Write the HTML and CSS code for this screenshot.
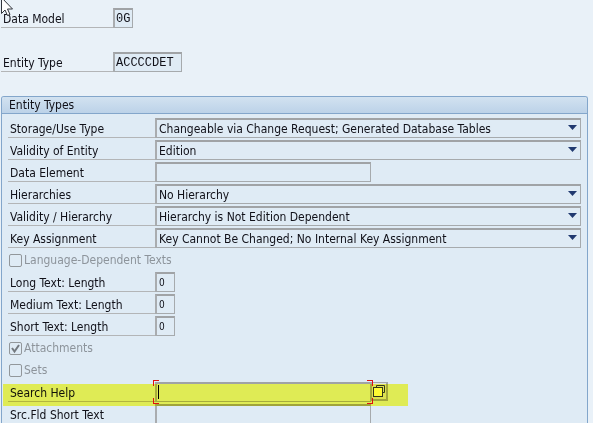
FILE: index.html
```
<!DOCTYPE html>
<html lang="en">
<head>
<meta charset="utf-8">
<title>Entity Type</title>
<link rel="stylesheet" href="styles.css">
</head>
<body>
<form class="page">
  <div class="keys">
    <div class="row"><label class="label" for="model">Data Model</label><input class="field mono w2" id="model" value="0G" readonly></div>
    <div class="row"><label class="label" for="entity">Entity Type</label><input class="field mono w8" id="entity" value="ACCCCDET" readonly></div>
  </div>
  <section class="panel">
    <h2 class="title">Entity Types</h2>
    <div class="rows">
      <div class="row"><label class="label" for="storage">Storage/Use Type</label><select class="field wide" id="storage"><option>Changeable via Change Request; Generated Database Tables</option></select></div>
      <div class="row"><label class="label" for="validity">Validity of Entity</label><select class="field wide" id="validity"><option>Edition</option></select></div>
      <div class="row"><label class="label" for="element">Data Element</label><input class="field text" id="element"></div>
      <div class="row"><label class="label" for="hier">Hierarchies</label><select class="field wide" id="hier"><option>No Hierarchy</option></select></div>
      <div class="row"><label class="label" for="vhier">Validity / Hierarchy</label><select class="field wide" id="vhier"><option>Hierarchy is Not Edition Dependent</option></select></div>
      <div class="row"><label class="label" for="keyas">Key Assignment</label><select class="field wide" id="keyas"><option>Key Cannot Be Changed; No Internal Key Assignment</option></select></div>
      <label class="check"><input type="checkbox" disabled>Language-Dependent Texts</label>
      <div class="row"><label class="label" for="long">Long Text: Length</label><input class="field num" id="long" value="0"></div>
      <div class="row"><label class="label" for="medium">Medium Text: Length</label><input class="field num" id="medium" value="0"></div>
      <div class="row"><label class="label" for="short">Short Text: Length</label><input class="field num" id="short" value="0"></div>
      <label class="check"><input type="checkbox" checked disabled>Attachments</label>
      <label class="check"><input type="checkbox" disabled>Sets</label>
      <div class="row marked">
        <label class="label" for="search">Search Help</label>
        <span class="focus"><input class="field text" id="search"><i class="caret"></i>
          <i class="corner tl"></i><i class="corner tr"></i><i class="corner bl"></i><i class="corner br"></i></span>
        <button class="help" type="button" aria-label="Possible entries">
          <svg width="12" height="12" viewBox="0 0 12 12"><path d="M3.500 2.500v-2h8v7h-2" fill="none" stroke="#33364a"/><rect x=".5" y="2.500" width="9" height="9" fill="#fffb90" stroke="#33364a"/></svg>
        </button>
      </div>
      <div class="row"><label class="label" for="src">Src.Fld Short Text</label><input class="field text" id="src"></div>
    </div>
  </section>
</form>
<svg class="pointer" width="14" height="22" viewBox="0 0 14 22"><path d="M1.500-2.500v16l3.500-3.500 2.500 5.500 2.500-1-2.500-5.500h5z" fill="#fff" stroke="#30343c"/></svg>
</body>
</html>
```
FILE: styles.css
```
* { box-sizing: border-box; }
body {
  margin: 0;
  background: #e9f1f8;
  color: #101018;
  font: 12px/18px "DejaVu Sans Condensed", "DejaVu Sans", sans-serif;
  font-stretch: condensed;
}
.page {
  display: flex;
  flex-direction: column;
  height: 100vh;
  padding: 8px 5px 0 1px;
  overflow: hidden;
}
.keys { display: grid; gap: 24px; margin-bottom: 24px; }
.keys .label { width: 112px; }
.row { display: flex; position: relative; height: 20px; }
.label {
  flex: none;
  width: 147px;
  height: 20px;
  padding: 2px 0 0 2px;
  border-bottom: 1px solid #b3b5b7;
  white-space: nowrap;
}
.field {
  height: 20px;
  margin: 0;
  padding: 0 2px;
  border: 1px solid #a6aaad;
  border-top: 2px solid #a0a3a6;
  border-left: 2px solid #a9acaf;
  border-radius: 0;
  outline: 0;
  background: #dfebf5;
  color: inherit;
  font: inherit;
}
.mono { font-family: "Liberation Mono", monospace; }
.w2 { width: 20px; padding: 0 1px; }
.w8 { width: 69px; padding: 0 1px; }
.text { width: 216px; }
.num { width: 20px; font-size: 10px; }
.wide {
  flex: 1;
  min-width: 0;
  appearance: none;
  background: #dfebf5 url("data:image/svg+xml,%3Csvg xmlns='http://www.w3.org/2000/svg' width='9' height='5'%3E%3Cpath d='M0 0h9L4.500 5z' fill='%23213a70'/%3E%3C/svg%3E") no-repeat right 3px top 5px;
}
.panel {
  flex: 1;
  min-height: 0;
  overflow: hidden;
  border: 1px solid #83a6cb;
  border-bottom: 0;
  border-radius: 3px 3px 0 0;
  background: #dfebf5;
}
.title {
  height: 17px;
  margin: 0;
  padding-left: 7px;
  border-bottom: 1px solid #83a6cb;
  background: linear-gradient(#d2e2f0, #bcd2e8);
  font: inherit;
  line-height: 16px;
}
.rows { display: grid; gap: 2px; padding: 4px 6px 0; }
.check { display: flex; align-items: center; height: 20px; color: #8d949b; }
.check input {
  appearance: none;
  width: 13px;
  height: 13px;
  margin: 0 2px 0 1px;
  border: 1px solid #92979b;
  border-radius: 2px;
}
.check input:checked {
  background: url("data:image/svg+xml,%3Csvg xmlns='http://www.w3.org/2000/svg' width='11' height='11'%3E%3Cpath d='M2 5l2.500 3.500L9 2' fill='none' stroke='%23747a80' stroke-width='2'/%3E%3C/svg%3E") no-repeat;
}
.marked::after {
  content: "";
  position: absolute;
  left: -5px;
  top: 2px;
  width: 405px;
  height: 22px;
  background: #ffff58;
  mix-blend-mode: multiply;
  pointer-events: none;
  z-index: 1;
}
.focus { position: relative; display: flex; }
.caret { position: absolute; left: 3px; top: 3px; width: 1px; height: 14px; background: #000; }
.corner { position: absolute; z-index: 2; width: 6px; height: 6px; border: 0 solid #e01010; }
.tl { left: -2px; top: -2px; border-width: 1px 0 0 1px; }
.tr { right: -2px; top: -2px; border-width: 1px 1px 0 0; }
.bl { left: -2px; bottom: -2px; border-width: 0 0 1px 1px; }
.br { right: -2px; bottom: -2px; border-width: 0 1px 1px 0; }
.help {
  display: flex;
  align-items: center;
  justify-content: center;
  width: 17px;
  height: 19px;
  padding: 0;
  border: 1px solid #a4a7aa;
  border-right-width: 2px;
  border-bottom-width: 2px;
  background: #dde2e8;
}
.pointer { position: absolute; left: 0; top: 0; }
```
